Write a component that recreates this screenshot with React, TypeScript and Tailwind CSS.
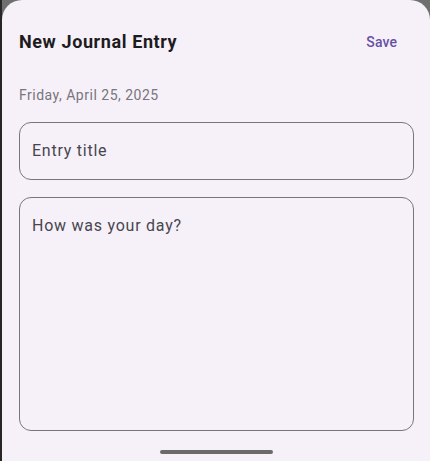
export default function App() {
  return (
    <div className="flex h-[461px] w-[430px] overflow-hidden bg-[#6f6f6f]" style={{ fontFamily: 'Roboto, "Noto Sans", sans-serif' }}>
      <div className="w-[2px] shrink-0 bg-[#262626]" />
      <div className="flex flex-1 flex-col rounded-t-[20px] bg-[#f6f1f8] pl-[17px] pr-[16px]">
        <div className="mt-[30px] flex h-[24px] items-center justify-between">
          <h1 className="text-[18px] font-bold leading-[24px] tracking-[0.6px] text-[#1d1b20]">New Journal Entry</h1>
          <button className="mr-[17px] text-[14px] font-medium leading-[20px] tracking-[0.1px] text-[#6750a4]">Save</button>
        </div>
        <p className="mt-[31px] text-[14px] leading-[20px] tracking-[0.5px] text-[#79747e]">Friday, April 25, 2025</p>
        <div className="mt-[17px] flex h-[58px] items-center rounded-[12px] border border-[#79747e] px-[12px]">
          <span className="text-[16px] leading-[24px] tracking-[0.75px] text-[#49454f]">Entry title</span>
        </div>
        <div className="mt-[17px] h-[234px] rounded-[12px] border border-[#79747e] px-[12px] pt-[16px]">
          <span className="text-[16px] leading-[24px] tracking-[0.75px] text-[#49454f]">How was your day?</span>
        </div>
        <div className="mt-[19px] flex justify-center">
          <div className="h-[4px] w-[113px] rounded-full bg-[#6b6b6b]" />
        </div>
      </div>
    </div>
  )
}
